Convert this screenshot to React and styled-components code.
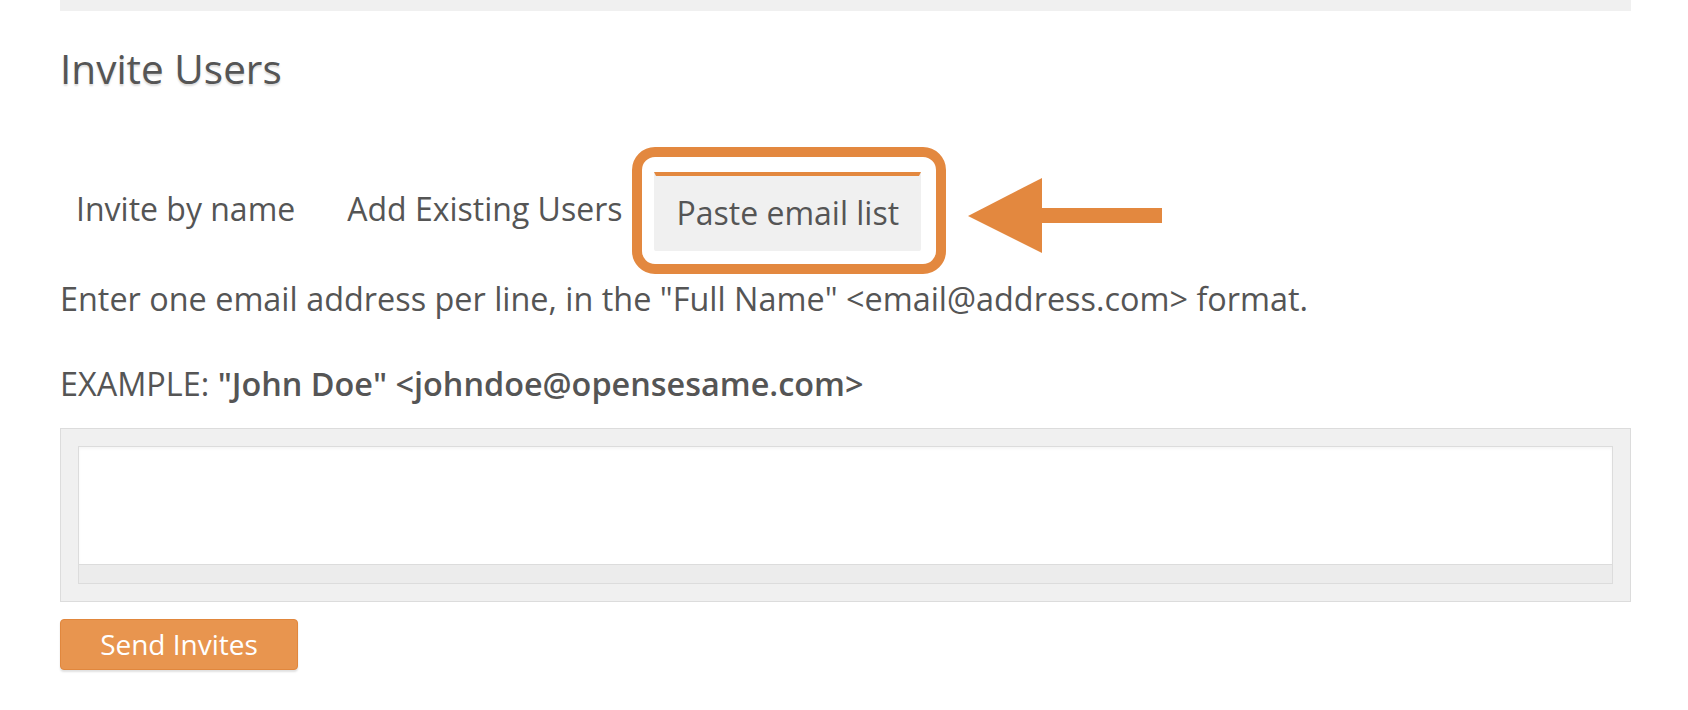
import React, { useState } from 'react'
import styled, { createGlobalStyle } from 'styled-components'

const GlobalStyle = createGlobalStyle`
  html, body {
    margin: 0;
    padding: 0;
    background: #fff;
  }
  body {
    font-family: 'Open Sans', 'Noto Sans', 'Liberation Sans', sans-serif;
    color: #555;
  }
`

const PageStyle = styled.div`
  padding: 0 57px 40px 60px;
`

const TopBarStyle = styled.div`
  height: 11px;
  background-color: #f0f0f0;
`

const TitleStyle = styled.h2`
  margin: 36px 0 0;
  font-size: 40.5px;
  line-height: 44px;
  font-weight: 400;
  color: #555;
  text-shadow: 0 2px 2px rgba(0, 0, 0, 0.15);
`

const TabsStyle = styled.div`
  display: flex;
  flex-direction: row;
  align-items: flex-start;
  gap: 12px;
  margin: 81px 0 0 -4px;
`

const TabStyle = styled.div`
  position: relative;
  font-size: 32px;
  line-height: 1.4;
  padding: 15px 20px;
  color: #555;
  cursor: pointer;
  white-space: nowrap;
  background-color: ${({ active }) => (active ? '#f0f0f0' : 'transparent')};
  border-top: ${({ active }) => (active ? '4px solid #e3883f' : 'none')};
  border-left: ${({ active }) => (active ? '2px solid #f0f0f0' : 'none')};
  border-right: ${({ active }) => (active ? '2px solid #f0f0f0' : 'none')};
  border-radius: 0 0 2px 2px;
`

/* annotation ring drawn over the screenshot */
const HighlightStyle = styled.span`
  position: absolute;
  top: -29px;
  left: -24px;
  right: -27px;
  bottom: -23px;
  border: 10px solid #e3883f;
  border-radius: 23px;
  pointer-events: none;
`

const ArrowStyle = styled.svg`
  position: absolute;
  top: 2px;
  left: calc(100% + 49px);
  width: 194px;
  height: 75px;
  pointer-events: none;
`

const TextStyle = styled.p`
  margin: ${({ first }) => (first ? '25px 0 0' : '40px 0 0')};
  font-size: 32.4px;
  line-height: 45px;
  color: #555;
  strong {
    font-weight: 600;
  }
`

const BoxStyle = styled.div`
  margin-top: 22px;
  padding: 17px;
  background-color: #f0f0f0;
  border: 1px solid #dcdcdc;
`

const TextAreaStyle = styled.textarea`
  display: block;
  box-sizing: border-box;
  width: 100%;
  height: 119px;
  margin: 0;
  padding: 8px;
  resize: none;
  border: 1px solid #dcdcdc;
  background-color: #fff;
  box-shadow: inset 0 2px 3px rgba(0, 0, 0, 0.04);
  font-family: inherit;
  font-size: 28px;
  color: #555;
  &:focus {
    outline: none;
  }
`

const GrippieStyle = styled.div`
  height: 18px;
  background-color: #ececec;
  border: 1px solid #dcdcdc;
  border-top: none;
`

const SendButtonStyle = styled.button`
  display: block;
  box-sizing: border-box;
  margin-top: 17px;
  width: 238px;
  height: 51px;
  padding: 0;
  background-color: #e8954f;
  border: 1px solid #e1873d;
  border-radius: 4px;
  box-shadow: 0 2px 2px rgba(0, 0, 0, 0.12);
  color: #fff;
  font-family: inherit;
  font-size: 28px;
  line-height: 1;
  cursor: pointer;
`

const tabs = ['Invite by name', 'Add Existing Users', 'Paste email list']

export default function App() {
  const [current, setCurrent] = useState(2)
  const [emails, setEmails] = useState('')

  return (
    <PageStyle>
      <GlobalStyle />
      <TopBarStyle />
      <TitleStyle>Invite Users</TitleStyle>
      <TabsStyle>
        {tabs.map((label, i) => (
          <TabStyle key={label} active={i === current} onClick={() => setCurrent(i)}>
            {label}
            {i === 2 && (
              <>
                <HighlightStyle />
                <ArrowStyle viewBox="0 0 194 75">
                  <polygon points="0,38 74,0 74,75" fill="#e3883f" />
                  <rect x="73" y="30" width="121" height="15" fill="#e3883f" />
                </ArrowStyle>
              </>
            )}
          </TabStyle>
        ))}
      </TabsStyle>
      <TextStyle first>
        Enter one email address per line, in the "Full Name" &lt;email@address.com&gt; format.
      </TextStyle>
      <TextStyle>
        EXAMPLE: <strong>"John Doe" &lt;johndoe@opensesame.com&gt;</strong>
      </TextStyle>
      <BoxStyle>
        <TextAreaStyle value={emails} onChange={(e) => setEmails(e.target.value)} />
        <GrippieStyle />
      </BoxStyle>
      <SendButtonStyle>Send Invites</SendButtonStyle>
    </PageStyle>
  )
}
